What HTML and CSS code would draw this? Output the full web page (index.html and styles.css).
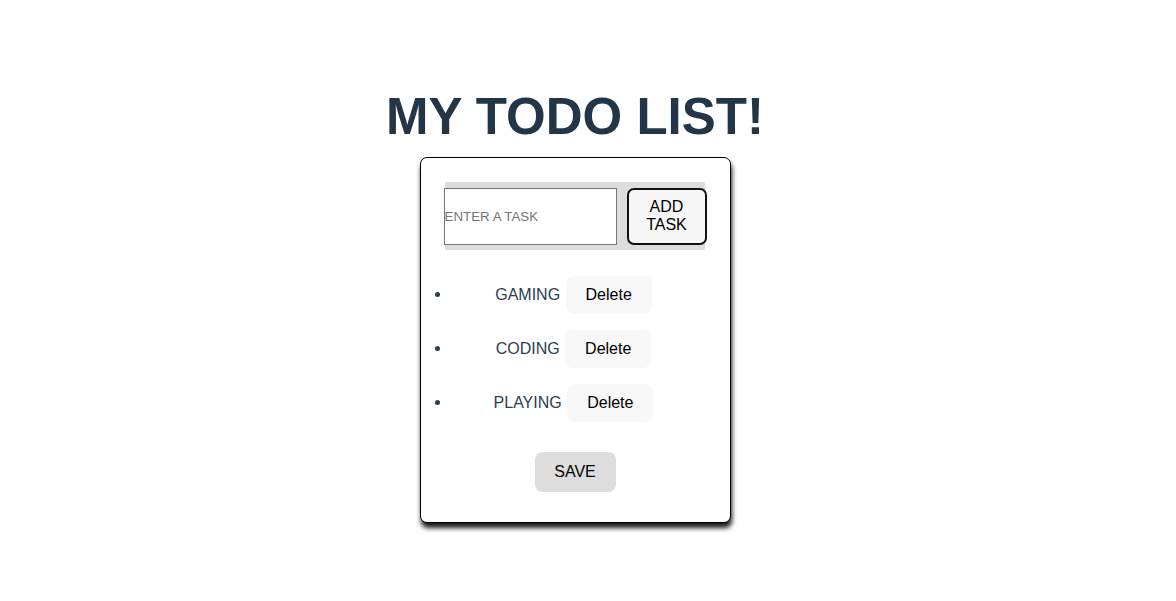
FILE: index.html
```html
<!DOCTYPE html>
<html>
<head>
<meta charset="utf-8">
<link rel="stylesheet" href="styles.css">
</head>
<body>
<div class="app">
  <h1 class="title">MY TODO LIST!</h1>
  <div class="card">
    <form class="add-form">
      <input class="task-input" type="text" placeholder="ENTER A TASK">
      <button class="add-btn" type="button">ADD<br>TASK</button>
    </form>
    <ul class="tasks">
      <li class="task"><span class="task-name">GAMING</span> <button class="del-btn" type="button">Delete</button></li>
      <li class="task"><span class="task-name">CODING</span> <button class="del-btn" type="button">Delete</button></li>
      <li class="task"><span class="task-name">PLAYING</span> <button class="del-btn" type="button">Delete</button></li>
    </ul>
    <button class="save-btn" type="button">SAVE</button>
  </div>
</div>
</body>
</html>
```

FILE: styles.css
```css
html, body {
  margin: 0;
  padding: 0;
  background: #ffffff;
}

.app {
  font-family: "Liberation Sans", Arial, Helvetica, sans-serif;
  color: #2c3e50;
  text-align: center;
  display: flex;
  flex-direction: column;
  align-items: center;
  padding-right: 26px;
  padding-bottom: 20px;
}

.title {
  font-size: 51px;
  font-weight: bold;
  color: #233648;
  margin: 87px 0 10px;
  line-height: 60px;
}

.card {
  box-sizing: border-box;
  width: 311px;
  border: 1px solid #000;
  border-radius: 7px;
  padding: 24px 23px 30px;
  box-shadow: 1px 5px 5px rgba(0, 0, 0, 0.9);
  background: #fff;
  display: flex;
  flex-direction: column;
  align-items: center;
}

.add-form {
  display: flex;
  align-items: center;
  background: #dddddd;
  width: 260px;
  height: 68px;
  margin: 0 0 0 1px;
  align-self: flex-start;
}

.task-input {
  box-sizing: border-box;
  width: 173px;
  height: 57px;
  margin-left: -1px;
  padding: 0;
  border: 1px solid #767676;
  border-radius: 0;
  font-family: "Liberation Sans", Arial, sans-serif;
  font-size: 13.33px;
  color: #000;
  background: #fff;
}

.task-input::placeholder {
  color: #757575;
}

.add-btn {
  box-sizing: border-box;
  width: 80px;
  height: 57px;
  margin-left: 10px;
  margin-right: -2px;
  border: 2px solid #111;
  border-radius: 7px;
  background: #f7f7f7;
  color: #000;
  font-family: "Liberation Sans", Arial, sans-serif;
  font-size: 16px;
  line-height: 18px;
  padding: 0;
}

.tasks {
  align-self: stretch;
  margin: 25px 10px 0 0;
  padding: 0 0 0 7px;
  list-style: disc;
}

.task {
  font-size: 16px;
  height: 38px;
  line-height: 38px;
  margin-bottom: 16px;
}

.task:last-child {
  margin-bottom: 0;
}

.task-name {
  vertical-align: middle;
}

.del-btn {
  box-sizing: border-box;
  height: 38px;
  padding: 0 20px;
  margin-left: 1px;
  border: none;
  border-radius: 8px;
  background: #f8f8f8;
  color: #000;
  font-family: "Liberation Sans", Arial, sans-serif;
  font-size: 16px;
  vertical-align: middle;
}

.save-btn {
  box-sizing: border-box;
  margin-top: 31px;
  width: 81px;
  height: 40px;
  border: none;
  border-radius: 8px;
  background: #dddddd;
  color: #000;
  font-family: "Liberation Sans", Arial, sans-serif;
  font-size: 16px;
  padding: 0;
}
```
